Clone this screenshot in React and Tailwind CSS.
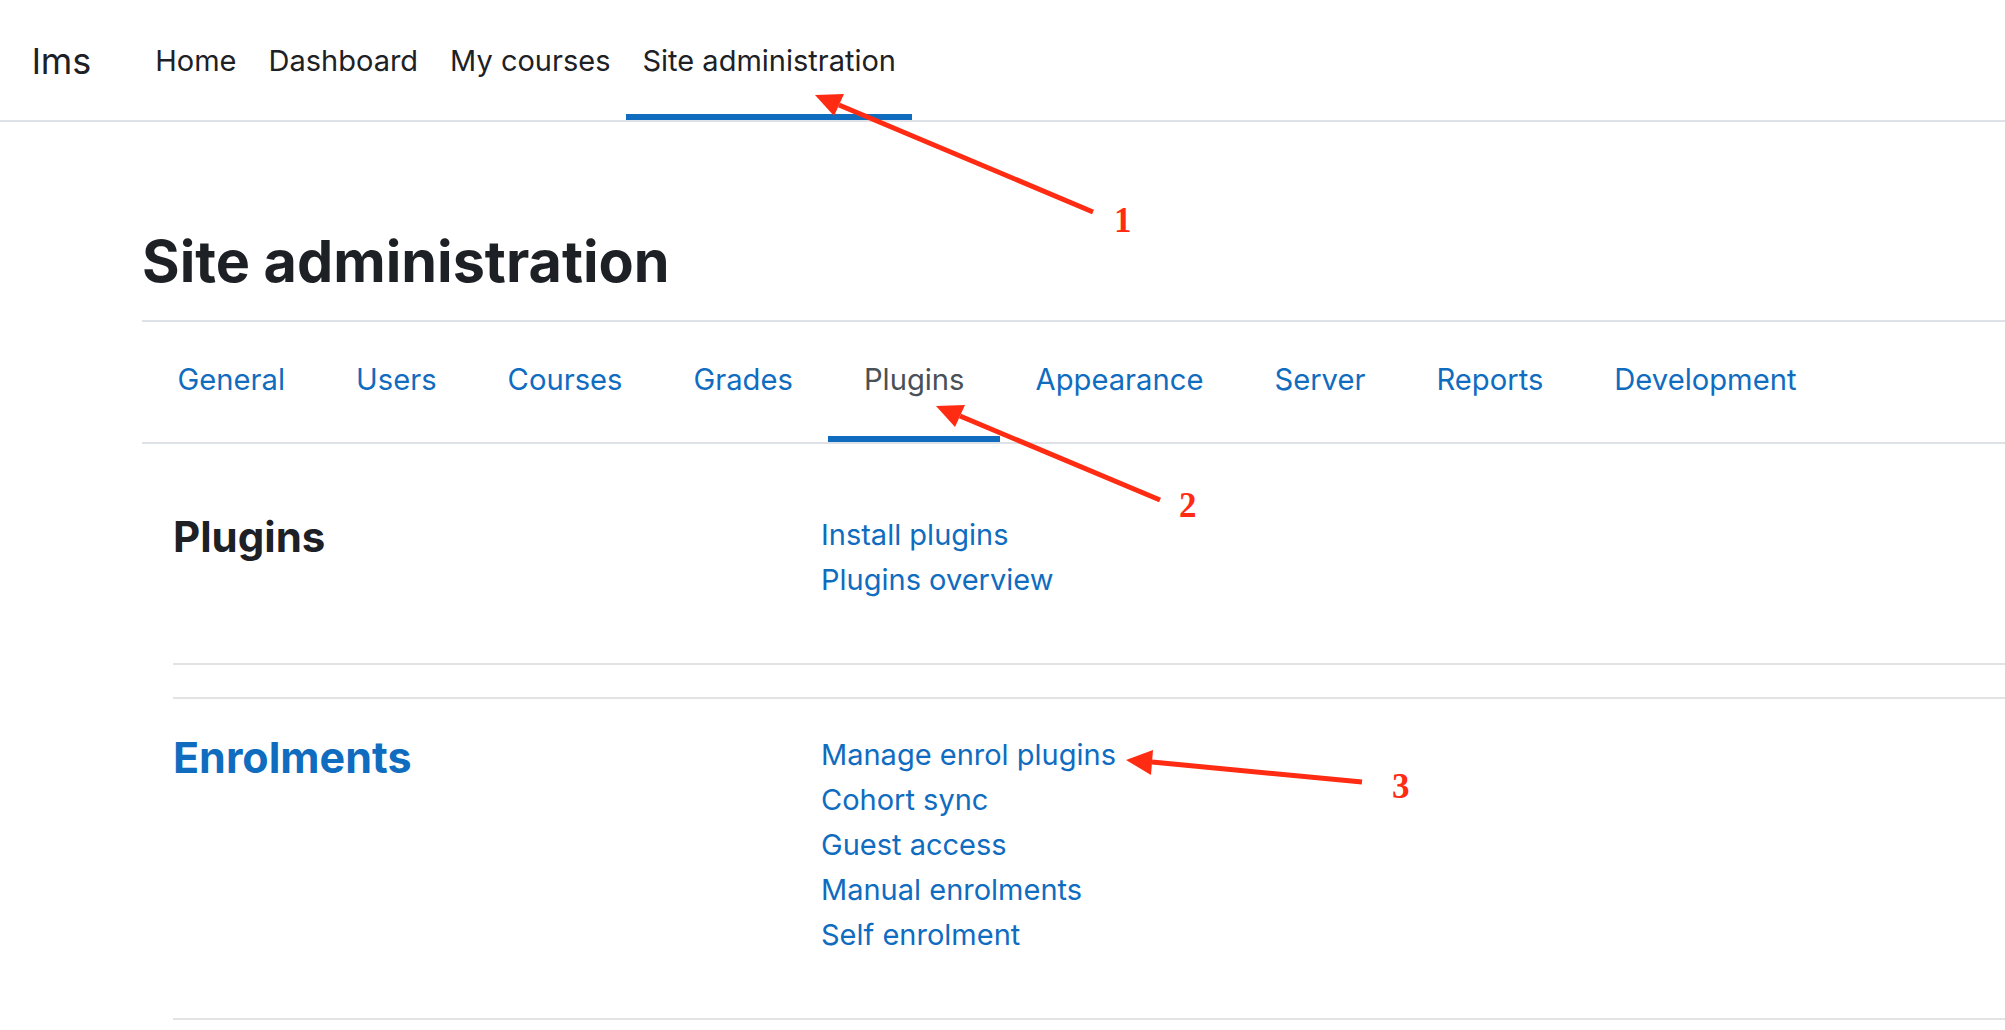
import React from 'react'

const NAV = ['Home', 'Dashboard', 'My courses', 'Site administration']
const TABS = ['General', 'Users', 'Courses', 'Grades', 'Plugins', 'Appearance', 'Server', 'Reports', 'Development']

const SECTIONS = [
  { title: 'Plugins', link: false, items: ['Install plugins', 'Plugins overview'] },
  {
    title: 'Enrolments',
    link: true,
    items: ['Manage enrol plugins', 'Cohort sync', 'Guest access', 'Manual enrolments', 'Self enrolment'],
  },
]

/* ── red annotation arrows drawn over the screenshot ── */
function Annotations() {
  return (
    <svg className="pointer-events-none absolute inset-0" width="2005" height="1030" viewBox="0 0 2005 1030">
      <g fill="#ff2b12" stroke="#ff2b12">
        <line x1="1093" y1="212" x2="839" y2="105" strokeWidth="5" />
        <polygon points="815,95 844,94 834,116" stroke="none" />
        <line x1="1160" y1="500" x2="960" y2="416" strokeWidth="5" />
        <polygon points="936,406 965,405 955,427" stroke="none" />
        <line x1="1362" y1="782" x2="1152" y2="762" strokeWidth="5" />
        <polygon points="1126,760 1153,750 1151,775" stroke="none" />
      </g>
      <g fill="#ff2b12" fontFamily="'Liberation Serif', serif" fontWeight="700" fontSize="35">
        <text x="1114" y="232">1</text>
        <text x="1179" y="517">2</text>
        <text x="1392" y="798">3</text>
      </g>
    </svg>
  )
}

export default function App() {
  return (
    <div className="relative w-[2005px] h-[1030px] overflow-hidden bg-white font-['Inter',sans-serif] text-[#1d2125]">
      {/* ── Top navbar ── */}
      <header className="flex h-[122px] border-b-2 border-[#dee2e6] pl-[32px]">
        <div className="flex items-center pt-[8px] pb-[6px] mr-[48px] text-[36px]">lms</div>
        <nav className="flex">
          {NAV.map((item) => {
            const active = item === 'Site administration'
            return (
              <a
                key={item}
                className={`flex items-center px-[16px] pt-[8px] text-[29px] border-b-[6px] ${
                  active ? 'border-[#0f6cbf]' : 'border-transparent'
                }`}
              >
                {item}
              </a>
            )
          })}
        </nav>
      </header>

      <main className="pl-[142px]">
        {/* ── Page heading ── */}
        <div className="border-b-2 border-[#dee2e6] pt-[104px] pb-[24px]">
          <h1 className="text-[57.5px] font-bold leading-[70px]">Site administration</h1>
        </div>

        {/* ── Category tabs ── */}
        <div className="flex h-[122px] border-b-2 border-[#dee2e6]">
          {TABS.map((tab) => {
            const active = tab === 'Plugins'
            return (
              <a
                key={tab}
                className={`flex items-center px-[35.5px] pt-[1px] text-[29.2px] border-b-[6px] ${
                  active ? 'border-[#0f6cbf] text-[#495057]' : 'border-transparent text-[#0f6cbf]'
                }`}
              >
                {tab}
              </a>
            )
          })}
        </div>

        {/* ── Sections ── */}
        <div className="pl-[31px] pt-[32px]">
          {SECTIONS.map((s, i) => (
            <div key={s.title} className={i > 0 ? 'border-t-2 border-[#e3e3e3] mt-[32px]' : ''}>
              <div
                className={`flex items-start border-b-2 border-[#e3e3e3] ${
                  i > 0 ? 'pt-[33px] pb-[61px]' : 'pt-[36px] pb-[61px]'
                }`}
              >
                <h3
                  className={`w-[648px] shrink-0 font-bold leading-[50px] ${
                    s.link ? 'text-[43px] text-[#0f6cbf]' : 'text-[42px] text-[#1d2125]'
                  }`}
                >
                  {s.title}
                </h3>
                <ul className="flex flex-col">
                  {s.items.map((it) => (
                    <li key={it} className="text-[29px] leading-[45px] text-[#0f6cbf]">
                      {it}
                    </li>
                  ))}
                </ul>
              </div>
            </div>
          ))}
        </div>
      </main>

      <Annotations />
    </div>
  )
}
